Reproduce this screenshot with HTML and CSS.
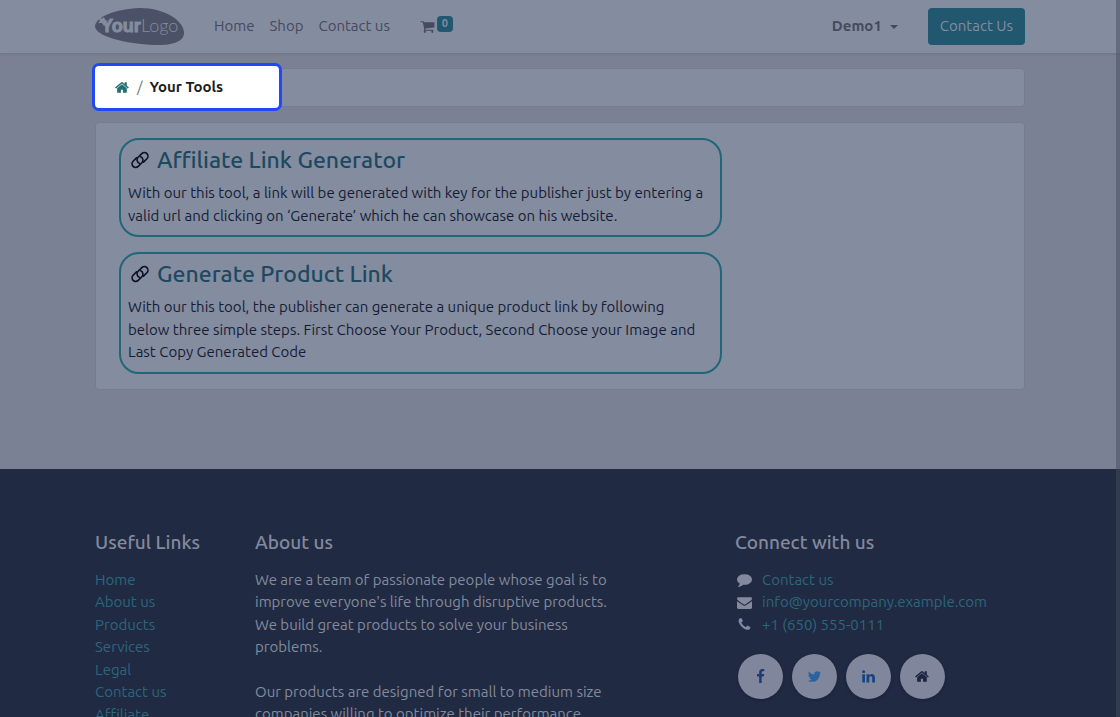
FILE: index.html
```html
<!DOCTYPE html>
<html lang="en">
<head>
<meta charset="utf-8">
<meta name="viewport" content="width=device-width, initial-scale=1">
<title>Your Tools</title>
<link rel="stylesheet" href="styles.css">
</head>
<body>
<svg class="defs" aria-hidden="true">
  <symbol id="home" viewBox="0 0 1792 1792"><path d="M1408 992v480q0 26-19 45t-45 19h-384v-384h-256v384h-384q-26 0-45-19t-19-45v-480q0-1 .5-3t.5-3l575-474 575 474q1 2 1 6zm223-69l-62 74q-8 9-21 11h-3q-13 0-21-7l-692-577-692 577q-12 8-24 7-13-2-21-11l-62-74q-8-10-7-23.500t11-21.500l719-599q32-26 76-26t76 26l244 204v-195q0-14 9-23t23-9h192q14 0 23 9t9 23v408l219 182q10 8 11 21.500t-7 23.500z"/></symbol>
  <symbol id="link" viewBox="0 0 18 18"><g fill="none" stroke="currentColor" stroke-width="1.600" stroke-linecap="round"><path d="M8.300 12.200a3.600 3.600 0 0 1-1.200-5.900l3.700-3.700a3.600 3.600 0 0 1 5.100 5.100l-3.400 3.400"/><path d="M9.700 5.800a3.600 3.600 0 0 1 1.200 5.900l-3.700 3.700a3.600 3.600 0 0 1-5.100-5.100l3.400-3.400"/></g></symbol>
</svg>

<header class="header">
  <div class="container header-row">
    <a class="logo" href="#" aria-label="Your Logo">
      <svg width="89" height="38" viewBox="0 0 89 38">
        <path class="logo-shape" d="M0 18C1 9 20 1 45 0C70 0 89 13 89 25C89 34 76 37 64 37C40 37 0 30 0 18Z"/>
        <path class="logo-spark" d="M3 9l4 2 2-2 1 3 3 1-3 2-1 3-2-3-4 0 2-2z"/>
        <text class="logo-bold" x="6" y="24">Your</text>
        <text class="logo-light" x="46" y="24">Logo</text>
      </svg>
    </a>
    <nav class="nav">
      <a href="#">Home</a>
      <a href="#">Shop</a>
      <a href="#">Contact us</a>
      <a class="cart" href="#" aria-label="Cart">
        <svg class="cart-icon" viewBox="0 0 1792 1792"><path d="M704 1536q0 52-38 90t-90 38-90-38-38-90 38-90 90-38 90 38 38 90zm896 0q0 52-38 90t-90 38-90-38-38-90 38-90 90-38 90 38 38 90zm128-1088v512q0 24-16.500 42.500t-40.500 21.500l-1044 122q13 60 13 70 0 16-24 64h920q26 0 45 19t19 45-19 45-45 19h-1024q-26 0-45-19t-19-45q0-11 8-31.500t16-36 21.500-40 15.500-29.500l-177-823h-204q-26 0-45-19t-19-45 19-45 45-19h256q16 0 28.500 6.500t19.500 15.500 13 24.500 8 26 5.500 29.500 4.500 26h1201q26 0 45 19t19 45z"/></svg>
        <span class="badge">0</span>
      </a>
    </nav>
    <button class="account" type="button">Demo1<span class="caret"></span></button>
    <a class="cta" href="#">Contact Us</a>
  </div>
</header>

<main class="container main">
  <nav class="panel crumbs" aria-label="Breadcrumb">
    <div class="spotlight">
      <a class="crumb-home" href="#" aria-label="Home"><svg class="icon"><use href="#home"/></svg></a>
      <span class="crumb-sep">/</span>
      <span class="crumb-current">Your Tools</span>
    </div>
  </nav>
  <section class="panel tools">
    <article class="tool">
      <h4 class="tool-title"><svg class="link-icon"><use href="#link"/></svg><a href="#">Affiliate Link Generator</a></h4>
      <p>With our this tool, a link will be generated with key for the publisher just by entering a<br>valid url and clicking on ‘Generate’ which he can showcase on his website.</p>
    </article>
    <article class="tool">
      <h4 class="tool-title"><svg class="link-icon"><use href="#link"/></svg><a href="#">Generate Product Link</a></h4>
      <p>With our this tool, the publisher can generate a unique product link by following<br>below three simple steps. First Choose Your Product, Second Choose your Image and<br>Last Copy Generated Code</p>
    </article>
  </section>
</main>

<footer class="footer">
  <div class="container footer-grid">
    <section>
      <h5>Useful Links</h5>
      <ul class="links">
        <li><a href="#">Home</a></li>
        <li><a href="#">About us</a></li>
        <li><a href="#">Products</a></li>
        <li><a href="#">Services</a></li>
        <li><a href="#">Legal</a></li>
        <li><a href="#">Contact us</a></li>
        <li><a href="#">Affiliate</a></li>
      </ul>
    </section>
    <section class="about">
      <h5>About us</h5>
      <p>We are a team of passionate people whose goal is to<br>improve everyone's life through disruptive products.<br>We build great products to solve your business<br>problems.</p>
      <p>Our products are designed for small to medium size<br>companies willing to optimize their performance.</p>
    </section>
    <section>
      <h5>Connect with us</h5>
      <ul class="contact">
        <li><svg class="icon" viewBox="0 0 1792 1792"><path d="M1792 896q0 174-120 321.500t-326 233-450 85.500q-70 0-145-8-198 175-460 242-49 14-114 22-17 2-30.500-9t-17.500-29v-1q-3-4-.5-12t2-10 4.500-9.500l6-9 7-8.500 8-9q7-8 31-34.500t34.500-38 31-39.500 32.500-51 27-59 26-76q-157-89-247.500-220t-90.500-281q0-130 71-248.500t191-204.500 286-136.500 348-50.500 348 50.500 286 136.500 191 204.500 71 248.500z"/></svg><a href="#">Contact us</a></li>
        <li><svg class="icon" viewBox="0 0 1792 1792"><path d="M1792 710v794q0 66-47 113t-113 47h-1472q-66 0-113-47t-47-113v-794q44 49 101 87 362 246 497 345 57 42 92.500 65.500t94.500 48 110 24.500h2q51 0 110-24.500t94.500-48 92.500-65.500q170-123 498-345 57-39 100-87zm0-294q0 79-49 151t-122 123q-376 261-468 325-10 7-42.500 31t-54 38.500-52 32.500-57.500 27-50 9h-2q-23 0-50-9t-57.500-27-52-32.500-54-38.500-42.500-31q-91-64-262-182.500t-205-142.500q-62-42-117-115.500t-55-136.500q0-78 41.500-130t118.500-52h1472q65 0 112.500 47t47.500 113z"/></svg><a href="#">info@yourcompany.example.com</a></li>
        <li><svg class="icon" viewBox="0 0 1792 1792"><path d="M1600 1240q0 27-10 70.500t-21 68.500q-21 50-122 106-94 51-186 51-27 0-53-3.500t-57.500-12.500-47-14.500-55.500-20.500-49-18q-98-35-175-83-127-79-264-216t-216-264q-48-77-83-175-3-9-18-49t-20.500-55.500-14.500-47-12.500-57.500-3.500-53q0-92 51-186 56-101 106-122 25-11 68.500-21t70.500-10q14 0 21 3 18 6 53 76 11 19 30 54t35 63.500 31 53.500q3 4 17.500 25t21.500 35.500 7 28.500q0 20-28.500 50t-62 55-62 53-28.500 46q0 9 5 22.500t8.500 20.500 14 24 11.500 19q76 137 174 235t235 174q2 1 19 11.500t24 14 20.500 8.500 22.500 5q18 0 46-28.500t53-62 55-62 50-28.500q14 0 28.500 7t35.500 21.500 25 17.500q25 15 53.500 31t63.500 35 54 30q70 35 76 53 3 7 3 21z"/></svg><a href="#">+1 (650) 555-0111</a></li>
      </ul>
      <div class="social">
        <a class="facebook" href="#" aria-label="Facebook"><svg class="icon" viewBox="0 0 1792 1792"><path d="M1343 12v264h-157q-86 0-116 36t-30 108v189h293l-39 296h-254v759h-306v-759h-255v-296h255v-218q0-186 104-288.500t277-102.500q147 0 228 12z"/></svg></a>
        <a class="twitter" href="#" aria-label="Twitter"><svg class="icon" viewBox="0 0 1792 1792"><path d="M1684 408q-67 98-162 167 1 14 1 42 0 130-38 259.500t-115.500 248.500-184.500 210.500-258 146-323 54.500q-271 0-496-145 35 4 78 4 225 0 401-138-105-2-188-64.500t-114-159.500q33 5 61 5 43 0 85-11-112-23-185.500-111.500t-73.500-205.500v-4q68 38 146 41-66-44-105-115t-39-154q0-88 44-163 121 149 294.500 238.500t371.500 99.500q-8-38-8-74 0-134 94.500-228.500t228.500-94.500q140 0 236 102 109-21 205-78-37 115-142 178 93-10 186-50z"/></svg></a>
        <a class="linkedin" href="#" aria-label="LinkedIn"><svg class="icon" viewBox="0 0 1792 1792"><path d="M477 625v991h-330v-991h330zm21-306q1 73-50.500 122t-135.500 49h-2q-82 0-132-49t-50-122q0-74 51.500-122.500t134.500-48.500 133 48.500 51 122.500zm1166 729v568h-329v-530q0-105-40.500-164.500t-126.500-59.500q-63 0-105.500 34.500t-63.500 85.500q-11 30-11 81v553h-329q2-399 2-647t-1-296l-1-48h329v144h-2q20-32 41-56t56.500-52 87-43.500 114.500-15.500q171 0 275 113.500t104 332.500z"/></svg></a>
        <a class="homepage" href="#" aria-label="Home page"><svg class="icon"><use href="#home"/></svg></a>
      </div>
    </section>
  </div>
</footer>
<div class="scroll-track"></div>
</body>
</html>
```
FILE: styles.css
```css
* { box-sizing: border-box; }

html, body { height: 100%; }

body {
  margin: 0;
  display: flex;
  flex-direction: column;
  overflow: hidden;
  background: #7b8194;
  color: #141c35;
  font: 15px/1.5 Ubuntu, "Noto Sans", sans-serif;
}

a { color: inherit; text-decoration: none; }
h4, h5, p, ul { margin: 0; padding: 0; font-weight: 500; }
p, ul { font-weight: 400; }
ul { list-style: none; }

.defs { display: none; }
.icon { width: 15px; height: 15px; fill: currentColor; flex: none; }

.container {
  width: 100%;
  max-width: 960px;
  margin: 0 auto;
  padding: 0 15px;
}

.header {
  flex: none;
  background: #848c9f;
  color: #444a60;
  box-shadow: 0 1px 3px #6b7186;
}
.header-row { display: flex; align-items: center; height: 53px; }
.logo { display: flex; margin-right: 30px; }
.logo-shape { fill: #4b5166; }
.logo-spark { fill: #848c9f; }
.logo-bold, .logo-light { fill: #848c9f; font-family: "Liberation Sans", sans-serif; font-size: 18px; }
.logo-bold { font-weight: 700; stroke: #848c9f; stroke-width: 1px; }
.logo-light { font-family: Lato, sans-serif; font-weight: 300; }

.nav { display: flex; align-items: center; gap: 15px; margin-right: auto; }
.cart { display: flex; align-items: center; gap: 2px; margin-left: 15px; }
.cart-icon { width: 15px; height: 15px; fill: currentColor; }
.badge {
  width: 16px;
  height: 16px;
  margin-bottom: 6px;
  border-radius: 4px;
  background: #21586f;
  color: #848c9f;
  font-size: 11px;
  font-weight: 700;
  line-height: 14px;
  text-align: center;
}
.account {
  display: flex;
  align-items: center;
  gap: 8px;
  margin-right: 30px;
  padding: 0;
  border: 0;
  background: none;
  color: inherit;
  font: inherit;
  font-weight: 700;
}
.caret { border: 4px solid transparent; border-top-color: currentColor; border-bottom: 0; }
.cta {
  padding: 7px 12px;
  border-radius: 4px;
  background: #21586f;
  color: #848c9f;
}

.main { flex: none; padding-top: 15px; padding-bottom: 79px; }
.panel { border: 1px solid #757c91; border-radius: 4px; background: #848c9f; }
.crumbs { position: relative; height: 39px; margin-bottom: 15px; }
.spotlight {
  position: absolute;
  inset: -6px auto -5px -4px;
  width: 190px;
  display: flex;
  align-items: center;
  padding-left: 20px;
  border: 3px solid #2048f5;
  border-radius: 7px;
  background: #fff;
}
.crumb-home { display: flex; color: #1f6f73; }
.crumb-sep { margin: 0 7px; color: #6c757d; }
.crumb-current { color: #1c1c1c; font-weight: 700; }

.tools { display: grid; gap: 15px; padding: 15px 302px 15px 23px; }
.tool { padding: 4px 7px 8px; border: 2px solid #22667a; border-radius: 20px; }
.tool p { white-space: nowrap; }
.tool-title {
  display: flex;
  align-items: center;
  gap: 8px;
  padding-left: 3px;
  margin-bottom: 6px;
  color: #1d4960;
  font-size: 23px;
  line-height: 32px;
}
.link-icon { width: 18px; height: 18px; color: #0a1026; }

.footer { flex: 1; background: #202a42; color: #848a9d; }
.footer-grid { display: grid; grid-template-columns: 160px 1fr 290px; padding-top: 62px; }
.footer h5 { margin-bottom: 15px; font-size: 19px; line-height: 23px; }
.footer li a { color: #2b677c; }
.about p { margin-bottom: 22px; white-space: nowrap; }
.contact li { display: flex; align-items: center; gap: 10px; padding-left: 2px; }
.social { display: flex; gap: 9px; margin: 18px 0 0 3px; }
.social a {
  display: grid;
  place-items: center;
  width: 45px;
  height: 45px;
  border-radius: 50%;
  background: #80869b;
  box-shadow: 0 1px 3px #18213a;
}
.facebook { color: #213a75; }
.twitter { color: #2b62a0; }
.linkedin { color: #17457f; }
.homepage { color: #1c2540; }

.scroll-track { position: fixed; inset: 0 0 0 auto; width: 4px; background: rgba(65, 78, 96, 0.5); }
```
